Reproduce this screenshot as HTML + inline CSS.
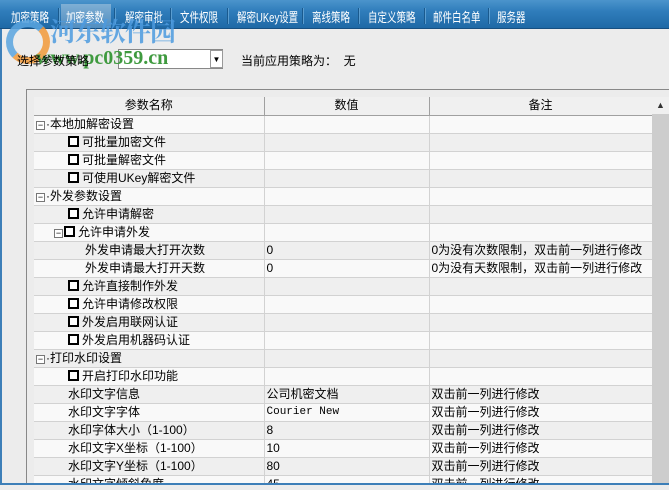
<!DOCTYPE html>
<html><head><meta charset="utf-8"><style>
*{margin:0;padding:0;box-sizing:border-box}
body{width:669px;height:490px;overflow:hidden;background:#ececec;font-family:"Liberation Sans","Noto Sans CJK SC",sans-serif;font-size:12px;color:#000;position:relative}
.bar{position:absolute;left:0;top:0;width:669px;height:29px;background:linear-gradient(#4b94cc,#2f7dbb 40%,#1f69a6);border-bottom:1px solid #174f80}
.tab{position:absolute;top:7px;color:#fff;font-size:13px;white-space:nowrap;transform:scaleX(0.73);transform-origin:0 0}
.sep{position:absolute;top:8px;width:1px;height:16px;background:#1a5a8e;box-shadow:1px 0 0 #5a9dd0}
.act{position:absolute;left:61px;top:4px;width:50px;height:24px;background:linear-gradient(#8fb8d8,#5e97c6);opacity:.8}
.wm1{position:absolute;left:50px;top:16px;font-family:"Noto Serif CJK SC",serif;font-weight:bold;font-size:26px;line-height:30px;color:#4d9be0;opacity:.85;letter-spacing:-1px}
.wm2{position:absolute;left:36px;top:47px;font-family:"Liberation Serif",serif;font-weight:bold;font-size:20px;color:#3f9a3f;z-index:5}
.logo{position:absolute;left:6px;top:20px;width:44px;height:44px;border-radius:50%;border:7px solid #5aa5e0;border-right-color:#f39a3a;border-bottom-color:#f39a3a;opacity:.85}
.panel{position:absolute;left:26px;top:89px;width:643px;height:397px;border-left:1px solid #888;border-top:1px solid #888;background:#ececec}
.grid{position:absolute;left:34px;top:97px;width:618px;height:386px;overflow:hidden}
table{border-collapse:collapse;table-layout:fixed;width:618px}
td,th{height:18px;border-bottom:1px solid #d2d2d2;border-right:1px solid #d2d2d2;padding:0 2px;white-space:nowrap;overflow:hidden;font-weight:normal;font-size:12px;line-height:17px}
th{background:#f0f0f0;border-bottom:1px solid #a0a0a0;border-right:1px solid #a0a0a0}
tr:nth-child(even) td{background:#f9f9f9}
tr:nth-child(odd) td{background:#efefef}
.cb{display:inline-block;width:11px;height:11px;border:2px solid #000;vertical-align:-1px;margin-right:3px;background:#fff}
.pm{display:inline-block;width:9px;height:9px;border:1px solid #777;font-size:9px;line-height:6px;text-align:center;vertical-align:0;margin-right:1px;background:#fff}
.mono{font-family:"Liberation Mono",monospace;font-size:11px}
.sb{position:absolute;left:652px;top:97px;width:17px;height:386px;background:#e0e0e0}
.sb .up{height:17px;background:#f0f0f0;text-align:center;font-size:9px;line-height:17px;color:#333}
.sb .th{position:absolute;top:17px;left:0;width:17px;height:369px;background:#cdcdcd}
.bot{position:absolute;left:0;top:483px;width:669px;height:2px;background:#3d7fb8}
</style></head><body>
<div class="bar"></div>
<div class="act"></div>
<span class="tab" style="left:11px">加密策略</span>
<span class="tab" style="left:66px">加密参数</span>
<span class="tab" style="left:125px">解密审批</span>
<span class="tab" style="left:180px">文件权限</span>
<span class="tab" style="left:237px">解密UKey设置</span>
<span class="tab" style="left:312px">离线策略</span>
<span class="tab" style="left:368px">自定义策略</span>
<span class="tab" style="left:433px">邮件白名单</span>
<span class="tab" style="left:497px">服务器</span>
<div class="sep" style="left:58px"></div><div class="sep" style="left:114px"></div><div class="sep" style="left:170px"></div><div class="sep" style="left:227px"></div><div class="sep" style="left:302px"></div><div class="sep" style="left:358px"></div><div class="sep" style="left:424px"></div><div class="sep" style="left:488px"></div>
<div class="panel"></div>
<div class="logo"></div>
<div class="wm1">河东软件园</div>
<div style="position:absolute;left:118px;top:49px;width:105px;height:20px;background:#fff;border:1px solid #888"></div>
<div style="position:absolute;left:210px;top:50px;width:13px;height:18px;background:#fff;border:1px solid #999;font-size:8px;text-align:center;line-height:18px">▼</div>
<div class="wm2">www.pc0359.cn</div>
<div style="position:absolute;left:17px;top:52px;z-index:6">选择参数策略</div>
<div style="position:absolute;left:241px;top:52px">当前应用策略为：&nbsp; 无</div>
<div class="grid"><table>
<colgroup><col style="width:230px"><col style="width:165px"><col style="width:223px"></colgroup>
<tr><th>参数名称</th><th>数值</th><th>备注</th></tr>
<tr><td><span class="pm">−</span>·本地加解密设置</td><td></td><td></td></tr>
<tr><td style="padding-left:34px"><span class="cb"></span>可批量加密文件</td><td></td><td></td></tr>
<tr><td style="padding-left:34px"><span class="cb"></span>可批量解密文件</td><td></td><td></td></tr>
<tr><td style="padding-left:34px"><span class="cb"></span>可使用UKey解密文件</td><td></td><td></td></tr>
<tr><td><span class="pm">−</span>·外发参数设置</td><td></td><td></td></tr>
<tr><td style="padding-left:34px"><span class="cb"></span>允许申请解密</td><td></td><td></td></tr>
<tr><td style="padding-left:20px"><span class="pm">−</span><span class="cb"></span>允许申请外发</td><td></td><td></td></tr>
<tr><td style="padding-left:51px">外发申请最大打开次数</td><td>0</td><td>0为没有次数限制，双击前一列进行修改</td></tr>
<tr><td style="padding-left:51px">外发申请最大打开天数</td><td>0</td><td>0为没有天数限制，双击前一列进行修改</td></tr>
<tr><td style="padding-left:34px"><span class="cb"></span>允许直接制作外发</td><td></td><td></td></tr>
<tr><td style="padding-left:34px"><span class="cb"></span>允许申请修改权限</td><td></td><td></td></tr>
<tr><td style="padding-left:34px"><span class="cb"></span>外发启用联网认证</td><td></td><td></td></tr>
<tr><td style="padding-left:34px"><span class="cb"></span>外发启用机器码认证</td><td></td><td></td></tr>
<tr><td><span class="pm">−</span>·打印水印设置</td><td></td><td></td></tr>
<tr><td style="padding-left:34px"><span class="cb"></span>开启打印水印功能</td><td></td><td></td></tr>
<tr><td style="padding-left:34px">水印文字信息</td><td>公司机密文档</td><td>双击前一列进行修改</td></tr>
<tr><td style="padding-left:34px">水印文字字体</td><td class="mono">Courier New</td><td>双击前一列进行修改</td></tr>
<tr><td style="padding-left:34px">水印字体大小（1-100）</td><td>8</td><td>双击前一列进行修改</td></tr>
<tr><td style="padding-left:34px">水印文字X坐标（1-100）</td><td>10</td><td>双击前一列进行修改</td></tr>
<tr><td style="padding-left:34px">水印文字Y坐标（1-100）</td><td>80</td><td>双击前一列进行修改</td></tr>
<tr><td style="padding-left:34px">水印文字倾斜角度</td><td>45</td><td>双击前一列进行修改</td></tr>
</table></div>
<div class="sb"><div class="up">▲</div><div class="th"></div></div>
<div style="position:absolute;left:0;top:483px;width:669px;height:7px;background:#ececec"></div>
<div class="bot"></div>
<div style="position:absolute;left:0;top:29px;width:2px;height:454px;background:#3d7fb8"></div>
</body></html>
